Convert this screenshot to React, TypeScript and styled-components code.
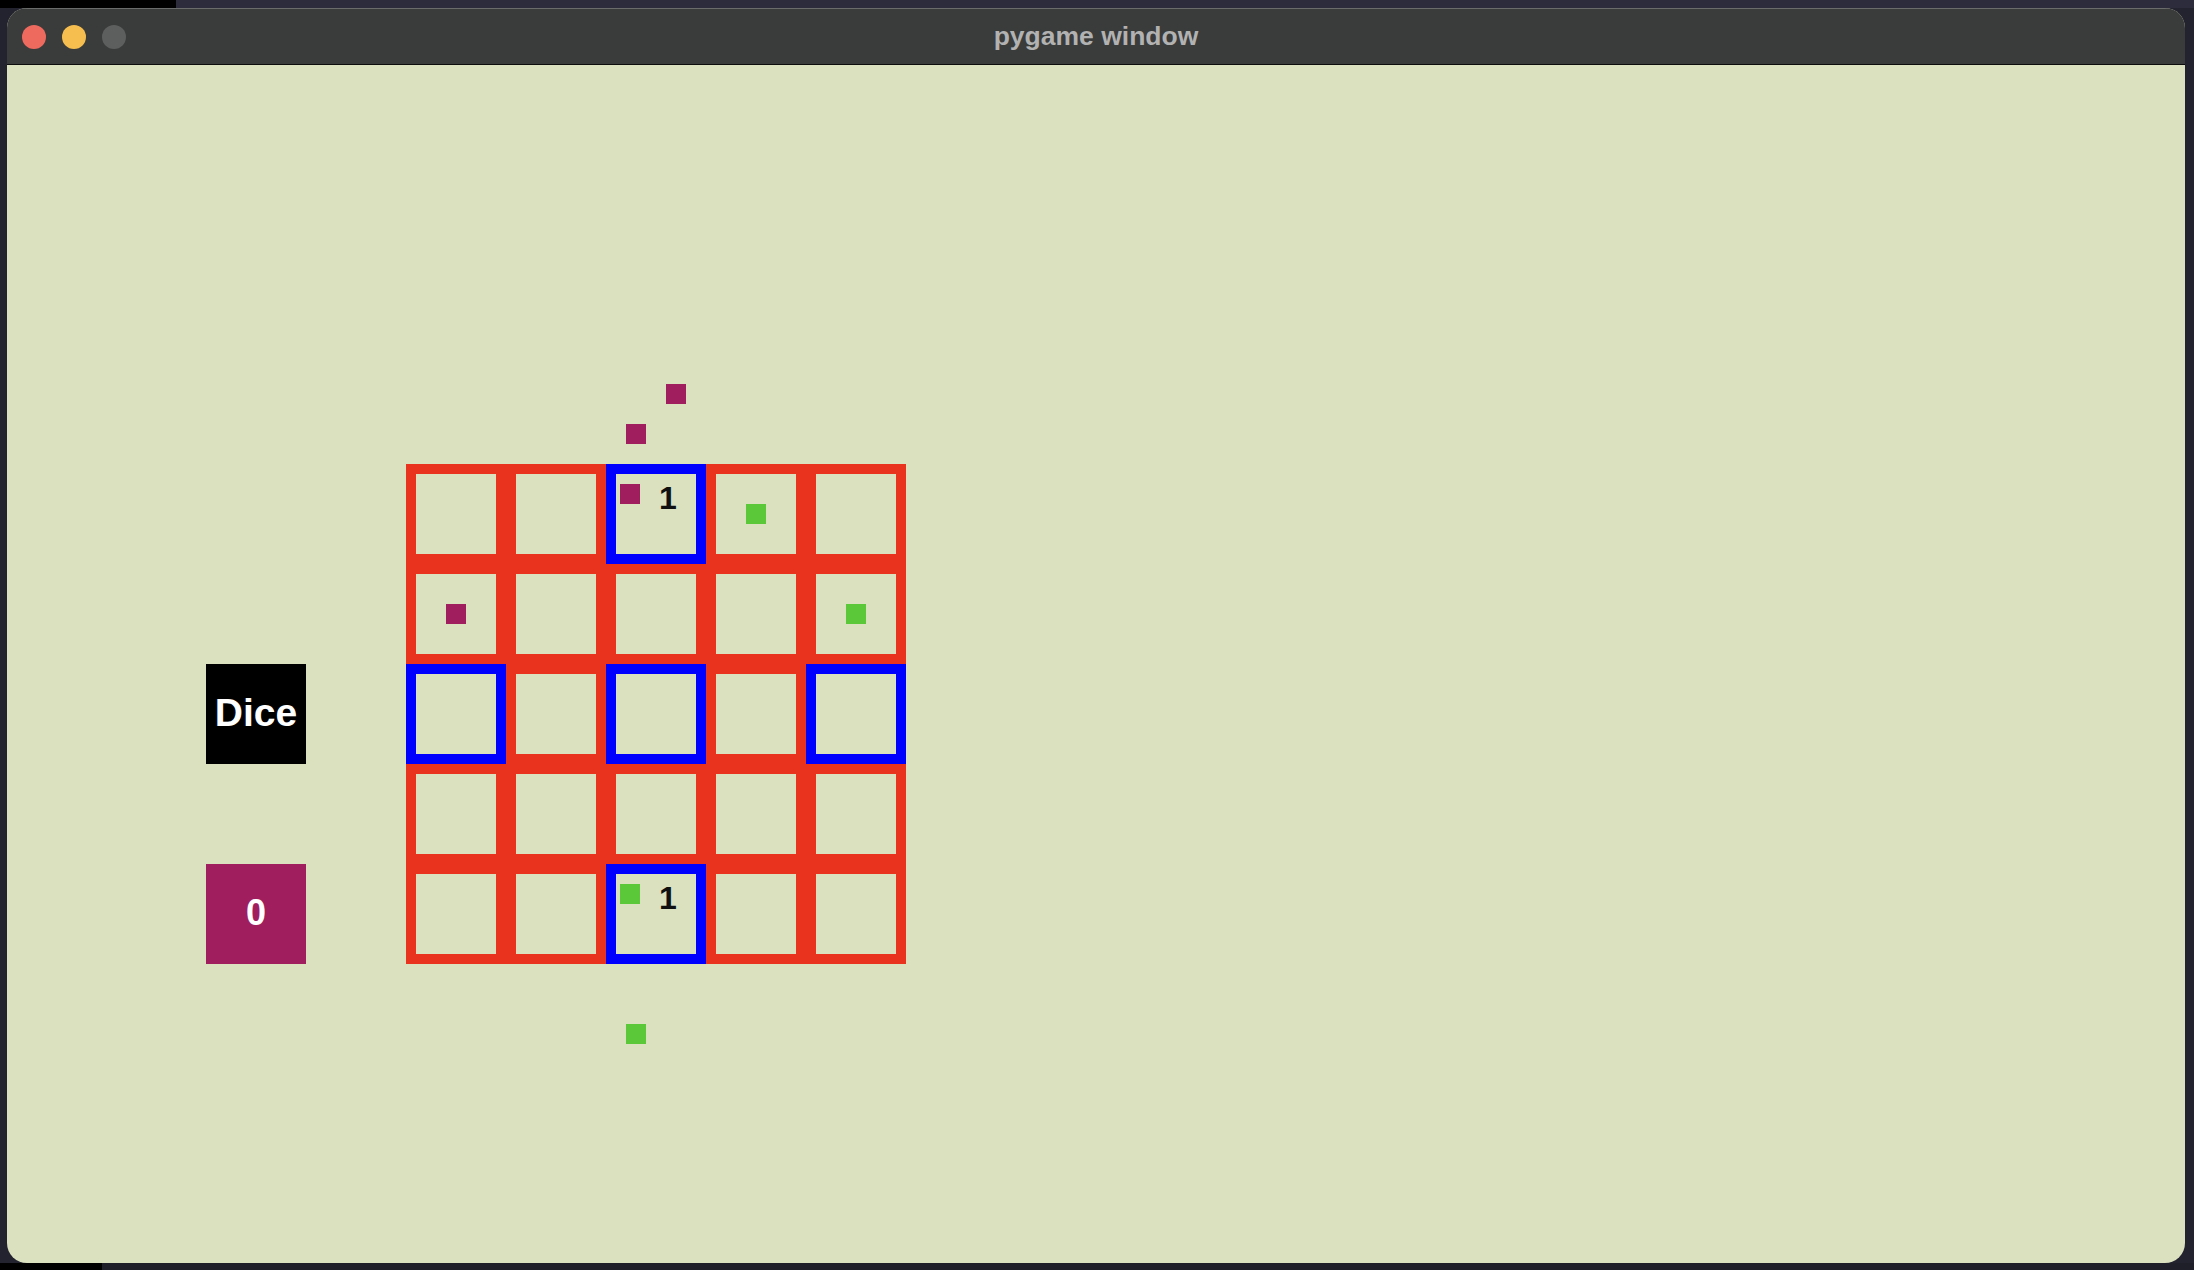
import styled, { createGlobalStyle } from 'styled-components';

type Player = 'magenta' | 'green';
type Token = { player: Player; x: number; y: number };
type CellData = { home?: boolean; token?: Player; count?: number; homeToken?: Player };

const colors = {
  bg: '#dbe0bf',
  red: '#e9331f',
  blue: '#0000ff',
  magenta: '#a01e5e',
  green: '#5bc83a',
};

const GlobalStyle = createGlobalStyle`
  html, body {
    margin: 0;
    padding: 0;
    background: #1d1d27;
    font-family: "Liberation Sans", Arial, sans-serif;
  }
`;

// board: 5x5, home cells have blue frames
const board: CellData[][] = [
  [{}, {}, { home: true, homeToken: 'magenta', count: 1 }, { token: 'green' }, {}],
  [{ token: 'magenta' }, {}, {}, {}, { token: 'green' }],
  [{ home: true }, {}, { home: true }, {}, { home: true }],
  [{}, {}, {}, {}, {}],
  [{}, {}, { home: true, homeToken: 'green', count: 1 }, {}, {}],
];

// tokens waiting off the board, canvas coordinates
const offBoard: Token[] = [
  { player: 'magenta', x: 659, y: 319 },
  { player: 'magenta', x: 619, y: 359 },
  { player: 'green', x: 619, y: 959 },
];

export default function App() {
  return (
    <>
      <GlobalStyle />
      <Desktop>
        <Window>
          <TitleBar>
            <Lights>
              <Light $color="#ee6a5f" />
              <Light $color="#f5be4f" />
              <Light $color="#5d5f5e" />
            </Lights>
            <Title>pygame window</Title>
            <span />
          </TitleBar>
          <Canvas>
            <Board>
              <SideColumn>
                <DiceButton>Dice</DiceButton>
                <ScoreBox>0</ScoreBox>
              </SideColumn>
              <Grid>
                {board.map((row, r) =>
                  row.map((cell, c) => (
                    <Cell key={`${r}-${c}`} $home={!!cell.home}>
                      {cell.token && <Piece $player={cell.token} />}
                      {cell.homeToken && <HomePiece $player={cell.homeToken} />}
                      {cell.count !== undefined && <Count>{cell.count}</Count>}
                    </Cell>
                  ))
                )}
              </Grid>
            </Board>
            {offBoard.map((t, i) => (
              <LoosePiece key={i} $player={t.player} style={{ left: t.x, top: t.y }} />
            ))}
          </Canvas>
        </Window>
      </Desktop>
    </>
  );
}

const Desktop = styled.div`
  width: 2194px;
  height: 1270px;
  box-sizing: border-box;
  padding: 8px 9px 7px 7px;
  background: linear-gradient(90deg, #000 0 176px, #2c2c3c 176px) top / 100% 8px no-repeat,
    linear-gradient(90deg, #000 0 102px, #1f1f29 102px) bottom / 100% 7px no-repeat,
    #23232f;
  overflow: hidden;
`;

const Window = styled.div`
  width: 100%;
  height: 100%;
  display: flex;
  flex-direction: column;
  border-radius: 20px;
  overflow: hidden;
  background: ${colors.bg};
`;

const TitleBar = styled.div`
  height: 57px;
  flex: none;
  display: grid;
  grid-template-columns: 1fr auto 1fr;
  align-items: center;
  padding: 0 15px;
  background: #3a3b3b;
  border-top: 1px solid #6a6b6b;
  border-bottom: 1px solid #0d0d0d;
  box-sizing: border-box;
`;

const Lights = styled.div`
  display: flex;
  gap: 16px;
`;

const Light = styled.span<{ $color: string }>`
  width: 24px;
  height: 24px;
  border-radius: 50%;
  background: ${({ $color }) => $color};
`;

const Title = styled.div`
  font-family: "Liberation Sans", Arial, sans-serif;
  font-weight: bold;
  font-size: 26.5px;
  color: #b1b2b1;
`;

const Canvas = styled.div`
  position: relative;
  flex: 1;
`;

const Board = styled.div`
  display: flex;
  align-items: flex-end;
  gap: 100px;
  margin-top: 399px;
  margin-left: 199px;
`;

const SideColumn = styled.div`
  display: flex;
  flex-direction: column;
  gap: 100px;
`;

const SideBox = styled.div`
  width: 100px;
  height: 100px;
  box-sizing: border-box;
  display: flex;
  align-items: center;
  justify-content: center;
  color: #fff;
  font-family: "Liberation Sans", Arial, sans-serif;
  font-weight: bold;
`;

const DiceButton = styled(SideBox)`
  background: #000;
  font-size: 39px;
  padding-bottom: 3px;
`;

const ScoreBox = styled(SideBox)`
  background: ${colors.magenta};
  font-size: 36px;
  padding-bottom: 3px;
`;

const Grid = styled.div`
  display: grid;
  grid-template-columns: repeat(5, 100px);
  grid-template-rows: repeat(5, 100px);
`;

const Cell = styled.div<{ $home: boolean }>`
  position: relative;
  box-sizing: border-box;
  border: 10px solid ${({ $home }) => ($home ? colors.blue : colors.red)};
  background: ${colors.bg};
  display: flex;
  align-items: center;
  justify-content: center;
`;

const Piece = styled.div<{ $player: Player }>`
  width: 20px;
  height: 20px;
  background: ${({ $player }) => colors[$player]};
`;

const HomePiece = styled(Piece)`
  position: absolute;
  left: 4px;
  top: 10px;
`;

const LoosePiece = styled(Piece)`
  position: absolute;
`;

const Count = styled.span`
  position: absolute;
  left: 43px;
  top: 8px;
  font-family: "Liberation Sans", Arial, sans-serif;
  font-weight: bold;
  font-size: 32px;
  line-height: 32px;
  color: #111;
`;
